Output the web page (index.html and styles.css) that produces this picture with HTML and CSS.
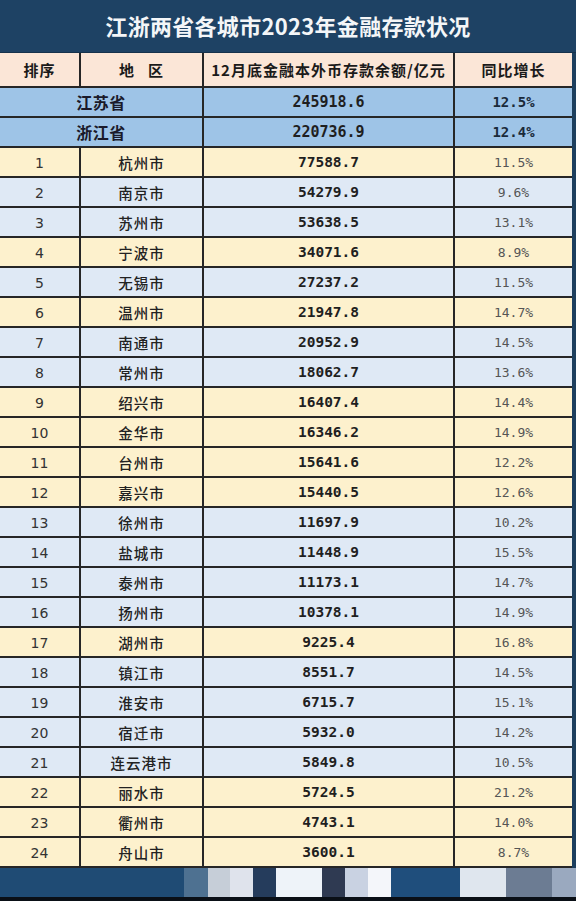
FILE: index.html
```html
<!DOCTYPE html>
<html lang="zh">
<head>
<meta charset="utf-8">
<link rel="stylesheet" href="styles.css">
</head>
<body>
<div class="page">
  <div class="title">江浙两省各城市2023年金融存款状况</div>
  <div class="grid">
    <div class="c hd">排序</div>
    <div class="c hd">地&nbsp;&nbsp;&nbsp;区</div>
    <div class="c hd">12月底金融本外币存款余额/亿元</div>
    <div class="c hd last">同比增长</div>

    <div class="c pv span2">江苏省</div>
    <div class="c pv num">245918.6</div>
    <div class="c pv pct">12.5%</div>
    <div class="c pv span2">浙江省</div>
    <div class="c pv num">220736.9</div>
    <div class="c pv pct">12.4%</div>

    <div class="c y rk">1</div><div class="c y city">杭州市</div><div class="c y num">77588.7</div><div class="c y pct">11.5%</div>
    <div class="c b rk">2</div><div class="c b city">南京市</div><div class="c b num">54279.9</div><div class="c b pct">9.6%</div>
    <div class="c b rk">3</div><div class="c b city">苏州市</div><div class="c b num">53638.5</div><div class="c b pct">13.1%</div>
    <div class="c y rk">4</div><div class="c y city">宁波市</div><div class="c y num">34071.6</div><div class="c y pct">8.9%</div>
    <div class="c b rk">5</div><div class="c b city">无锡市</div><div class="c b num">27237.2</div><div class="c b pct">11.5%</div>
    <div class="c y rk">6</div><div class="c y city">温州市</div><div class="c y num">21947.8</div><div class="c y pct">14.7%</div>
    <div class="c b rk">7</div><div class="c b city">南通市</div><div class="c b num">20952.9</div><div class="c b pct">14.5%</div>
    <div class="c b rk">8</div><div class="c b city">常州市</div><div class="c b num">18062.7</div><div class="c b pct">13.6%</div>
    <div class="c y rk">9</div><div class="c y city">绍兴市</div><div class="c y num">16407.4</div><div class="c y pct">14.4%</div>
    <div class="c y rk">10</div><div class="c y city">金华市</div><div class="c y num">16346.2</div><div class="c y pct">14.9%</div>
    <div class="c y rk">11</div><div class="c y city">台州市</div><div class="c y num">15641.6</div><div class="c y pct">12.2%</div>
    <div class="c y rk">12</div><div class="c y city">嘉兴市</div><div class="c y num">15440.5</div><div class="c y pct">12.6%</div>
    <div class="c b rk">13</div><div class="c b city">徐州市</div><div class="c b num">11697.9</div><div class="c b pct">10.2%</div>
    <div class="c b rk">14</div><div class="c b city">盐城市</div><div class="c b num">11448.9</div><div class="c b pct">15.5%</div>
    <div class="c b rk">15</div><div class="c b city">泰州市</div><div class="c b num">11173.1</div><div class="c b pct">14.7%</div>
    <div class="c b rk">16</div><div class="c b city">扬州市</div><div class="c b num">10378.1</div><div class="c b pct">14.9%</div>
    <div class="c y rk">17</div><div class="c y city">湖州市</div><div class="c y num">9225.4</div><div class="c y pct">16.8%</div>
    <div class="c b rk">18</div><div class="c b city">镇江市</div><div class="c b num">8551.7</div><div class="c b pct">14.5%</div>
    <div class="c b rk">19</div><div class="c b city">淮安市</div><div class="c b num">6715.7</div><div class="c b pct">15.1%</div>
    <div class="c b rk">20</div><div class="c b city">宿迁市</div><div class="c b num">5932.0</div><div class="c b pct">14.2%</div>
    <div class="c b rk">21</div><div class="c b city">连云港市</div><div class="c b num">5849.8</div><div class="c b pct">10.5%</div>
    <div class="c y rk">22</div><div class="c y city">丽水市</div><div class="c y num">5724.5</div><div class="c y pct">21.2%</div>
    <div class="c y rk">23</div><div class="c y city">衢州市</div><div class="c y num">4743.1</div><div class="c y pct">14.0%</div>
    <div class="c y rk">24</div><div class="c y city">舟山市</div><div class="c y num">3600.1</div><div class="c y pct">8.7%</div>
  </div>
  <div class="footer">
    <div class="fb f0"></div>
    <div class="fb f1"></div>
    <div class="fb f2"></div>
    <div class="fb f3"></div>
    <div class="fb f4"></div>
    <div class="fb f5"></div>
    <div class="fb f6"></div>
    <div class="fb f7"></div>
    <div class="fb f8"></div>
    <div class="fb f9"></div>
    <div class="fb f10"></div>
    <div class="fb f11"></div>
    <div class="fb f12"></div>
  </div>
</div>
</body>
</html>
```

FILE: styles.css
```css
* { box-sizing: border-box; margin: 0; padding: 0; }
html, body { width: 576px; height: 901px; overflow: hidden; background: #0d1a26; }
body { font-family: "Noto Sans CJK SC", "Noto Sans", sans-serif; }
.page { width: 576px; height: 901px; display: flex; flex-direction: column; background: #1d3f5e; }
.title {
  height: 53px;
  background: #1e4264;
  color: #f4f6f8;
  font-size: 22px;
  font-weight: 700;
  display: flex; align-items: center; justify-content: center;
  padding-bottom: 2px;
  letter-spacing: 0.3px;
  border-bottom: 1px solid #16324c;
}
.grid {
  width: 572px;
  display: grid;
  grid-template-columns: 81px 123px 251px 117px;
  grid-auto-rows: 30px;
  grid-template-rows: 35px;
  background: #222;
}
.c {
  display: flex; align-items: center; justify-content: center;
  border-right: 2px solid #262626;
  border-bottom: 2px solid #262626;
  color: #2b2b2b;
  font-size: 14.5px;
}
.pct, .last { border-right: none; }
.hd { background: #fbe6d7; font-weight: 700; color: #1a1a1a; font-size: 15px; letter-spacing: 1px; }
.pv { background: #9ec4e7; font-weight: 700; color: #1a1a2a; }
.span2 { grid-column: span 2; font-size: 16px; letter-spacing: 0.5px; }
.pv.num { font-size: 15px; }
.pv.pct { font-size: 14px; color: #1a2a3a; }
.y { background: #fdf1cd; }
.b { background: #dfe9f5; }
.rk { font-family: "DejaVu Sans", sans-serif; font-size: 14px; color: #333; padding-top: 1px; }
.city { font-weight: 500; letter-spacing: 1px; color: #222; }
.num { font-family: "DejaVu Sans Mono", monospace; font-weight: 700; font-size: 14.5px; color: #1f1f1f; }
.pct { font-family: "DejaVu Sans Mono", monospace; font-size: 13px; color: #555; }
.footer {
  flex: 1;
  display: flex;
  align-items: stretch;
  border-bottom: 4px solid #0a0f16;
  background: #1e4a72;
}
.fb { height: 100%; }
.f0 { width: 184px; background: #1f4b74; }
.f1 { width: 24px; background: #4e7191; }
.f2 { width: 22px; background: #c6ced8; }
.f3 { width: 23px; background: #dfe3ec; }
.f4 { width: 23px; background: #253c5c; }
.f5 { width: 46px; background: #eef3f9; }
.f6 { width: 23px; background: #2f3a52; }
.f7 { width: 23px; background: #c9d2e2; }
.f8 { width: 23px; background: #f4f6fa; }
.f9 { width: 69px; background: #1f4e7c; }
.f10 { width: 46px; background: #dfe6ee; }
.f11 { width: 46px; background: #6c7c93; }
.f12 { flex: 1; background: #9aa9bf; }
```
